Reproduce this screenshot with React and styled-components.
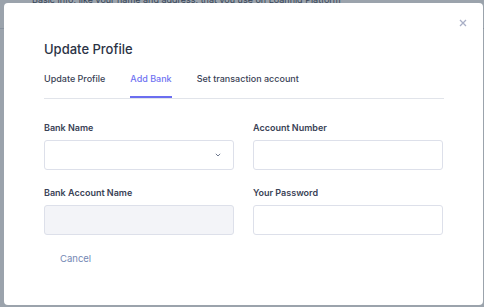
import React from "react";
import styled, { createGlobalStyle } from "styled-components";

const Global = createGlobalStyle`
  html, body { margin: 0; padding: 0; }
  body {
    width: 484px; height: 307px; overflow: hidden;
    background: #ffffff;
    font-family: Inter, "Noto Sans", "Liberation Sans", sans-serif;
  }
`;

const Page = styled.div`
  position: relative;
  width: 484px;
  height: 307px;
  overflow: hidden;
`;

const BehindHeader = styled.div`
  height: 35px;
  border-bottom: 1px solid #d7dbe2;
  padding-left: 32px;
  box-sizing: border-box;
`;

const BehindText = styled.p`
  margin: -6px 0 0;
  font-size: 9px;
  line-height: 12px;
  color: #2f3a4f;
  white-space: nowrap;
`;

const Overlay = styled.div`
  position: absolute;
  inset: 0;
  background: rgba(64, 78, 96, 0.52);
  display: flex;
  align-items: flex-start;
  padding: 3px 1px 0 4px;
  box-sizing: border-box;
`;

const Modal = styled.div`
  position: relative;
  width: 479px;
  height: 302px;
  background: #ffffff;
  border-radius: 4px;
  box-sizing: border-box;
  padding: 37px 39px 0 40px;
  display: flex;
  flex-direction: column;
`;

const CloseButton = styled.button`
  position: absolute;
  top: 12px;
  right: 12px;
  width: 16px;
  height: 16px;
  padding: 0;
  border: none;
  background: none;
  display: flex;
  align-items: center;
  justify-content: center;
  cursor: pointer;
`;

const Title = styled.h2`
  margin: 0;
  font-size: 13px;
  line-height: 18px;
  font-weight: 500;
  color: #2b3345;
`;

const Tabs = styled.div`
  margin-top: 15px;
  display: flex;
  gap: 25px;
  border-bottom: 1px solid #e1e4ea;
`;

const Tab = styled.div`
  font-size: 9px;
  line-height: 12px;
  font-weight: 500;
  padding-bottom: 11px;
  color: ${(p) => (p.$active ? "#6f72f2" : "#3a4255")};
  border-bottom: 2px solid ${(p) => (p.$active ? "#6b6ef0" : "transparent")};
`;

const Grid = styled.div`
  margin-top: 23px;
  display: grid;
  grid-template-columns: 190px 190px;
  column-gap: 19px;
  row-gap: 17px;
`;

const Field = styled.div`
  display: flex;
  flex-direction: column;
  gap: 6px;
`;

const Label = styled.label`
  font-size: 9px;
  line-height: 12px;
  font-weight: 600;
  color: #3a4256;
`;

const InputBox = styled.div`
  height: 30px;
  box-sizing: border-box;
  border: 1px solid #dde0ea;
  border-radius: 3px;
  background: ${(p) => (p.$disabled ? "#f3f4f8" : "#ffffff")};
  display: flex;
  align-items: center;
  justify-content: flex-end;
  padding-right: 12px;
`;

const Footer = styled.div`
  margin-top: 14px;
  display: flex;
`;

const CancelButton = styled.button`
  border: none;
  background: none;
  padding: 4px 16px;
  font-family: inherit;
  font-size: 9.5px;
  line-height: 12px;
  font-weight: 400;
  color: #7488b4;
  cursor: pointer;
`;

const Chevron = () => (
  <svg width="6" height="4" viewBox="0 0 6 4">
    <path d="M0.8 0.8 L3 3 L5.2 0.8" fill="none" stroke="#707a90" strokeWidth="1" />
  </svg>
);

const XIcon = () => (
  <svg width="8" height="8" viewBox="0 0 8 8">
    <path d="M1 1 L7 7 M7 1 L1 7" stroke="#a9afc6" strokeWidth="1.3" />
  </svg>
);

export default function App() {
  return (
    <>
      <Global />
      <Page>
        <BehindHeader>
          <BehindText>
            Basic info, like your name and address, that you use on Loannig Platform
          </BehindText>
        </BehindHeader>
        <Overlay>
          <Modal>
            <CloseButton aria-label="Close">
              <XIcon />
            </CloseButton>
            <Title>Update Profile</Title>
            <Tabs>
              <Tab>Update Profile</Tab>
              <Tab $active>Add Bank</Tab>
              <Tab>Set transaction account</Tab>
            </Tabs>
            <Grid>
              <Field>
                <Label>Bank Name</Label>
                <InputBox>
                  <Chevron />
                </InputBox>
              </Field>
              <Field>
                <Label>Account Number</Label>
                <InputBox />
              </Field>
              <Field>
                <Label>Bank Account Name</Label>
                <InputBox $disabled />
              </Field>
              <Field>
                <Label>Your Password</Label>
                <InputBox />
              </Field>
            </Grid>
            <Footer>
              <CancelButton>Cancel</CancelButton>
            </Footer>
          </Modal>
        </Overlay>
      </Page>
    </>
  );
}
